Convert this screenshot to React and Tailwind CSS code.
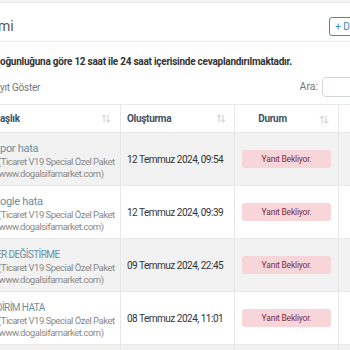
import React from "react";

function SortIcon() {
  return (
    <svg width="10" height="9" viewBox="0 0 10 9" fill="none" stroke="#c9cfd4" strokeWidth="1" strokeLinecap="round" strokeLinejoin="round">
      <path d="M3 8V1M1 3l2-2 2 2" />
      <path d="M7 1v7M5 6l2 2 2-2" />
    </svg>
  );
}

const rows = [
  { t: "por hata", caps: false, d: "12 Temmuz 2024, 09:54", bg: "bg-[#f2f2f2]" },
  { t: "ogle hata", caps: false, d: "12 Temmuz 2024, 09:39", bg: "bg-white" },
  { t: "ER DEĞİSTİRME", caps: true, d: "09 Temmuz 2024, 22:45", bg: "bg-[#f2f2f2]" },
  { t: "DİRİM HATA", caps: true, d: "08 Temmuz 2024, 11:01", bg: "bg-white" },
  { t: "", caps: false, d: "", bg: "bg-[#f2f2f2]" },
];

export default function App() {
  return (
    <div className="w-[350px] h-[350px] overflow-hidden bg-white font-['Roboto',sans-serif]">
      <div className="h-[3px] bg-[#f4f4f4] border-b border-[#e6e6e6]" />
      <div className="w-[380px]">
        <div className="h-[39px] flex items-center pt-[8px] border-b border-[#ececec]">
          <div className="w-[334px] text-[14px] text-[#555] ml-[-2px]">mi</div>
          <div className="h-[19px] px-[5px] flex items-center border border-[#3c8dbc] rounded-[3px] text-[#3c8dbc] text-[10px] whitespace-nowrap">
            + Destek
          </div>
        </div>
        <div className="pt-[13px] text-[10px] leading-[14px] font-bold tracking-[-0.25px] text-[#333] whitespace-nowrap">
          oğunluğuna göre 12 saat ile 24 saat içerisinde cevaplandırılmaktadır.
        </div>
        <div className="mt-[8px] h-[20px] flex items-center justify-between">
          <div className="text-[10px] tracking-[-0.25px] text-[#777]">yıt Göster</div>
          <div className="flex items-center gap-[4px]">
            <span className="text-[10.5px] text-[#777]">Ara:</span>
            <div className="w-[58px] h-[20px] border border-[#d2d6de] rounded-[4px] bg-white" />
          </div>
        </div>
        <div className="mt-[7px] border-t border-[#e8e8e8]">
          <div className="flex h-[28px] border-b border-[#e8e8e8] text-[10px] tracking-[-0.3px] font-bold text-[#3e5266]">
            <div className="w-[121px] flex items-center justify-between pr-[9px] border-r border-[#e8e8e8]">
              <span>aşlık</span>
              <SortIcon />
            </div>
            <div className="w-[114px] flex items-center justify-between pl-[6px] pr-[8px] border-r border-[#e8e8e8]">
              <span>Oluşturma</span>
              <SortIcon />
            </div>
            <div className="w-[104px] relative flex items-center justify-center pr-[28px] border-r border-[#e8e8e8]">
              <span>Durum</span>
              <div className="absolute right-[9px] top-[10px]"><SortIcon /></div>
            </div>
            <div className="flex-1" />
          </div>
          {rows.map((r, i) => (
            <div key={i} className={`flex h-[53px] border-b border-[#e8e8e8] ${r.bg}`}>
              <div className="w-[121px] pt-[9px] border-r border-[#e8e8e8] overflow-hidden whitespace-nowrap">
                {r.t && (
                  <>
                    <div
                      className={
                        r.caps
                          ? "ml-[-4px] text-[10px] leading-[14px] tracking-[-0.6px] text-[#6a8fa3]"
                          : "text-[11px] leading-[14px] tracking-[-0.3px] text-[#6a8fa3]"
                      }
                    >
                      {r.t}
                    </div>
                    <div className="ml-[-2px] text-[9.5px] leading-[12px] tracking-[-0.5px] text-[#888]">(Ticaret V19 Special Özel Paket</div>
                    <div className="ml-[-4px] text-[9.5px] leading-[12px] tracking-[-0.5px] text-[#888]">(www.dogalsifamarket.com)</div>
                  </>
                )}
              </div>
              <div className="w-[114px] flex items-center pl-[6px] text-[10px] tracking-[-0.5px] text-[#333] border-r border-[#e8e8e8] whitespace-nowrap">
                {r.d}
              </div>
              <div className="w-[104px] flex items-center px-[7px] border-r border-[#e8e8e8]">
                {r.t && (
                  <div className="w-full h-[18px] flex items-center justify-center rounded-[3px] bg-[#f7d5d9] text-[8.5px] tracking-[-0.2px] text-[#7d2e3a]">
                    Yanıt Bekliyor.
                  </div>
                )}
              </div>
              <div className="flex-1" />
            </div>
          ))}
        </div>
      </div>
    </div>
  );
}
